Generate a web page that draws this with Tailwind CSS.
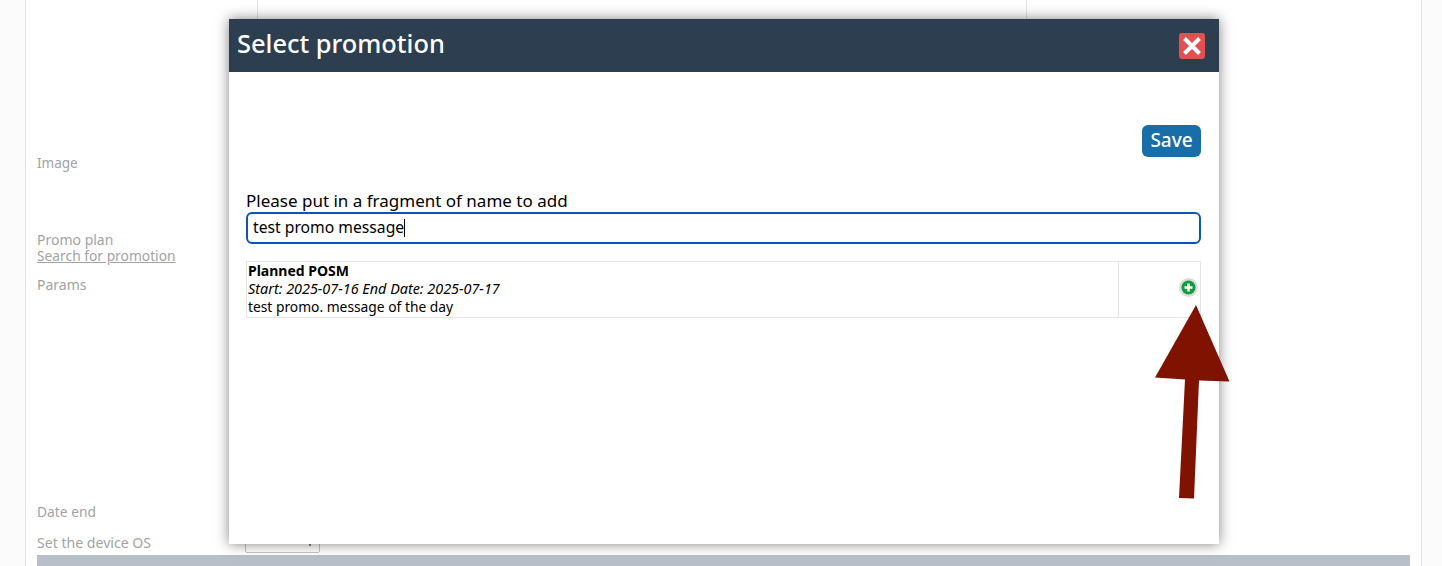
<!DOCTYPE html>
<html lang="en">
<head>
    <meta charset="UTF-8">
    <title>Select promotion</title>
    <script src="https://cdn.jsdelivr.net/npm/@tailwindcss/browser@4"></script>
</head>
<body>
    <div class="relative h-[566px] overflow-hidden bg-[#fbfbfb] font-['Noto_Sans','Open_Sans',sans-serif]">
        <!-- page behind the dialog -->
        <div class="ml-[25px] w-[1397px] h-full bg-white border-x border-[#e4e4e4] pl-[11px] pr-[11px] text-[14px] leading-[16px] text-[#a3a3a3]">
            <div class="h-[155px] ml-[220px] w-[770px] border-x border-[#e4e4e4]"></div>
            <div class="h-[77px] text-[13.5px]">Image</div>
            <div class="h-[45px]">
                <div>Promo plan</div>
                <a href="#" class="underline text-[13.8px]">Search for promotion</a>
            </div>
            <div class="h-[227px]">Params</div>
            <div class="h-[31px] text-[13.8px]">Date end</div>
            <div class="flex h-[20px]">
                <div class="w-[208px] text-[14.1px]">Set the device OS</div>
                <div class="flex justify-end items-start w-[75px] h-[20px] pt-[10px] pr-[8px] -mt-[2px] border border-[#c4c4c4] rounded-[2px]">
                    <span class="w-[2px] h-[2px] bg-[#808080]"></span>
                </div>
            </div>
            <div class="h-[11px] bg-[#b8bfc8]"></div>
        </div>

        <!-- dialog -->
        <div class="absolute left-[229px] top-[19px] w-[990px] h-[525px] bg-white text-black shadow-[0_0_12px_rgba(0,0,0,0.5)]">
            <div class="flex items-center justify-between h-[53px] pl-2 pr-[14px] bg-[#2c3e50]">
                <h2 class="pb-1 text-[25.4px] font-medium text-white">Select promotion</h2>
                <button class="flex items-center justify-center w-[26px] h-[26px] rounded-[3px] bg-[#e25052]">
                    <svg width="18" height="18" viewBox="0 0 18 18"><path d="M1.5 1.5l15 15M16.5 1.5l-15 15" stroke="#fff" stroke-width="4"/></svg>
                </button>
            </div>
            <div class="pl-[17px] pr-[18px]">
                <div class="flex justify-end pt-[53px]">
                    <button class="w-[59px] h-[32px] pb-[2px] rounded-[6px] bg-[#176ea8] text-[19px] font-medium text-white">Save</button>
                </div>
                <label class="block mt-[34px] text-[17px] leading-[20px]">Please put in a fragment of name to add</label>
                <div class="flex items-center h-[32px] mt-[1px] px-[5px] border-2 border-[#0a55b8] rounded-[6px] text-[15.7px]">test promo message<span class="w-px h-[18px] bg-black"></span></div>
                <div class="flex mt-[17px] h-[57px] border border-[#e6e6e6] text-[14px] leading-[18px]">
                    <div class="flex-1 pl-[1px]">
                        <div class="font-bold">Planned POSM</div>
                        <div class="italic text-[14.4px]">Start: 2025-07-16 End Date: 2025-07-17</div>
                        <div class="text-[13.8px]">test promo. message of the day</div>
                    </div>
                    <div class="flex items-center justify-end w-[82px] pr-[2px] pb-[4px] border-l border-[#e6e6e6]">
                        <svg width="19" height="19" viewBox="0 0 19 19">
                            <circle cx="9.5" cy="9.5" r="9.5" fill="#dcdcdc"/>
                            <circle cx="9.5" cy="9.5" r="7" fill="#129a3e"/>
                            <path d="M5.5 9.5h8M9.5 5.5v8" stroke="#fff" stroke-width="2.4"/>
                        </svg>
                    </div>
                </div>
            </div>
        </div>

        <!-- annotation arrow -->
        <svg class="absolute left-[1150px] top-[300px]" width="85" height="205" viewBox="0 0 85 205">
            <path d="M46 5L79.5 81.5L49 80.5L44 198.5L29 198L35 79.5L5 77.5Z" fill="#7f1200"/>
        </svg>
    </div>
</body>
</html>
